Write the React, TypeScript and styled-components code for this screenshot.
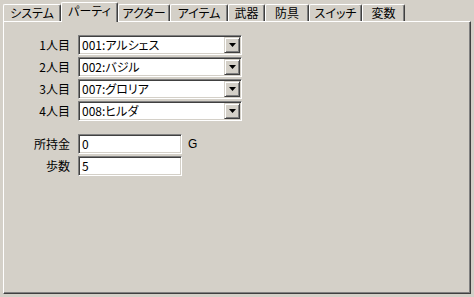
import { Fragment } from 'react';
import styled, { createGlobalStyle } from 'styled-components';

const GlobalStyle = createGlobalStyle`
    html, body {
        margin: 0;
        padding: 0;
        background: #d4d0c8;
    }
    body {
        font-family: "Noto Sans CJK JP", "Noto Sans", sans-serif;
        font-size: 12px;
        color: #000;
    }
`;

type TabProps = {
    $width: number;
    $active?: boolean;
};

const Window = styled.div`
    width: 474px;
    height: 297px;
    box-sizing: border-box;
    padding: 2px 3px 3px 3px;
    display: flex;
    flex-direction: column;
    background: #d4d0c8;
    font-feature-settings: "palt";
`;

const TabRow = styled.div`
    display: flex;
    align-items: flex-end;
    height: 19px;
`;

const Tab = styled.div<TabProps>`
    box-sizing: border-box;
    width: ${(p) => p.$width}px;
    height: ${(p) => (p.$active ? 20 : 17)}px;
    margin-bottom: ${(p) => (p.$active ? -1 : 0)}px;
    position: relative;
    z-index: ${(p) => (p.$active ? 2 : 1)};
    display: flex;
    align-items: center;
    justify-content: center;
    padding-bottom: ${(p) => (p.$active ? 3 : 0)}px;
    background: #d4d0c8;
    border-top: 1px solid #fff;
    border-left: 1px solid #fff;
    border-right: 1px solid #404040;
    border-radius: 2px 2px 0 0;
    box-shadow: inset -1px 0 #808080;
    line-height: 12px;
    white-space: nowrap;
`;

const Panel = styled.div`
    flex: 1;
    box-sizing: border-box;
    border-top: 1px solid #fff;
    border-left: 1px solid #fff;
    border-right: 1px solid #404040;
    border-bottom: 1px solid #404040;
    box-shadow: inset -1px -1px #808080;
    padding-top: 13px;
`;

const FormGrid = styled.div`
    display: grid;
    grid-template-columns: 66px 164px;
    column-gap: 8px;
    row-gap: 2px;
    align-items: center;
`;

const Label = styled.div`
    text-align: right;
    line-height: 14px;
    white-space: nowrap;
`;

const Spacer = styled.div`
    grid-column: 1 / -1;
    height: 9px;
`;

const Sunken = styled.div`
    box-sizing: border-box;
    height: 20px;
    background: #fff;
    border-top: 1px solid #808080;
    border-left: 1px solid #808080;
    border-right: 1px solid #fff;
    border-bottom: 1px solid #fff;
    box-shadow: inset 1px 1px #404040, inset -1px -1px #d4d0c8;
    display: flex;
    align-items: stretch;
    padding: 1px;
`;

const Combo = styled(Sunken)``;

const TextBox = styled(Sunken)`
    width: 104px;
`;

const FieldRow = styled.div`
    display: flex;
    align-items: center;
`;

const FieldText = styled.div`
    flex: 1;
    padding-left: 2px;
    line-height: 16px;
    white-space: nowrap;
    overflow: hidden;
`;

const DropButton = styled.div`
    box-sizing: border-box;
    width: 16px;
    background: #d4d0c8;
    border-top: 1px solid #d4d0c8;
    border-left: 1px solid #d4d0c8;
    border-right: 1px solid #404040;
    border-bottom: 1px solid #404040;
    box-shadow: inset 1px 1px #fff, inset -1px -1px #808080;
    display: flex;
    align-items: center;
    justify-content: center;
`;

const Unit = styled.div`
    font-family: "Liberation Sans", sans-serif;
    font-size: 12px;
    padding-left: 6px;
`;

const tabs = [
    { label: 'システム', width: 58 },
    { label: 'パーティ', width: 57, active: true },
    { label: 'アクター', width: 52 },
    { label: 'アイテム', width: 58 },
    { label: '武器', width: 37 },
    { label: '防具', width: 44 },
    { label: 'スイッチ', width: 53 },
    { label: '変数', width: 43 },
];

const members = [
    { label: '1人目', value: '001:アルシェス' },
    { label: '2人目', value: '002:バジル' },
    { label: '3人目', value: '007:グロリア' },
    { label: '4人目', value: '008:ヒルダ' },
];

const Arrow = () => (
    <svg width="7" height="4" viewBox="0 0 7 4">
        <path d="M0 0h7L3.5 4z" fill="#000" />
    </svg>
);

const App = () => {
    return (
        <>
            <GlobalStyle />
            <Window>
                <TabRow>
                    {tabs.map((t) => (
                        <Tab key={t.label} $width={t.width} $active={t.active}>
                            {t.label}
                        </Tab>
                    ))}
                </TabRow>
                <Panel>
                    <FormGrid>
                        {members.map((m) => (
                            <Fragment key={m.label}>
                                <Label>{m.label}</Label>
                                <Combo>
                                    <FieldText>{m.value}</FieldText>
                                    <DropButton>
                                        <Arrow />
                                    </DropButton>
                                </Combo>
                            </Fragment>
                        ))}
                        <Spacer />
                        <Label>所持金</Label>
                        <FieldRow>
                            <TextBox>
                                <FieldText>0</FieldText>
                            </TextBox>
                            <Unit>G</Unit>
                        </FieldRow>
                        <Label>歩数</Label>
                        <FieldRow>
                            <TextBox>
                                <FieldText>5</FieldText>
                            </TextBox>
                        </FieldRow>
                    </FormGrid>
                </Panel>
            </Window>
        </>
    );
};

export default App;
